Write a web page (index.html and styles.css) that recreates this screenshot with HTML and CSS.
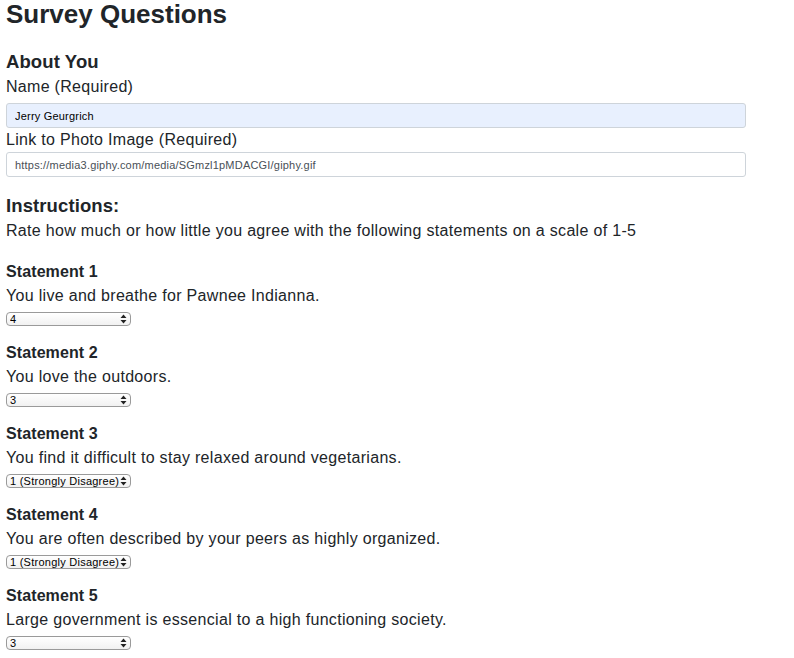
FILE: index.html
```html
<!DOCTYPE html>
<html lang="en">
<head>
<meta charset="utf-8">
<title>Survey Questions</title>
<link rel="stylesheet" href="styles.css">
</head>
<body>
<div class="page">
  <h1 class="title">Survey Questions</h1>

  <h3 class="section">About You</h3>
  <label class="label label-name" for="name">Name (Required)</label>
  <input id="name" class="field field-autofill" type="text" value="Jerry Geurgrich">
  <label class="label" for="photo">Link to Photo Image (Required)</label>
  <input id="photo" class="field" type="text" value="https://media3.giphy.com/media/SGmzl1pMDACGI/giphy.gif">

  <h3 class="section section-instr">Instructions:</h3>
  <p class="text text-instr">Rate how much or how little you agree with the following statements on a scale of 1-5</p>

  <div class="statements">
    <div class="statement">
      <h4 class="st-title">Statement 1</h4>
      <p class="text">You live and breathe for Pawnee Indianna.</p>
      <span class="select-wrap">
        <select class="select">
          <option>1 (Strongly Disagree)</option><option>2</option><option>3</option><option selected>4</option><option>5 (Strongly Agree)</option>
        </select>
        <svg class="arrows" width="7" height="10" viewBox="0 0 7 10"><path d="M3.5 0.5 L6.5 4 L0.5 4 Z M3.5 9.5 L6.5 6 L0.5 6 Z" fill="#222"/></svg>
      </span>
    </div>
    <div class="statement">
      <h4 class="st-title">Statement 2</h4>
      <p class="text">You love the outdoors.</p>
      <span class="select-wrap">
        <select class="select">
          <option>1 (Strongly Disagree)</option><option>2</option><option selected>3</option><option>4</option><option>5 (Strongly Agree)</option>
        </select>
        <svg class="arrows" width="7" height="10" viewBox="0 0 7 10"><path d="M3.5 0.5 L6.5 4 L0.5 4 Z M3.5 9.5 L6.5 6 L0.5 6 Z" fill="#222"/></svg>
      </span>
    </div>
    <div class="statement">
      <h4 class="st-title">Statement 3</h4>
      <p class="text">You find it difficult to stay relaxed around vegetarians.</p>
      <span class="select-wrap">
        <select class="select">
          <option selected>1 (Strongly Disagree)</option><option>2</option><option>3</option><option>4</option><option>5 (Strongly Agree)</option>
        </select>
        <svg class="arrows" width="7" height="10" viewBox="0 0 7 10"><path d="M3.5 0.5 L6.5 4 L0.5 4 Z M3.5 9.5 L6.5 6 L0.5 6 Z" fill="#222"/></svg>
      </span>
    </div>
    <div class="statement">
      <h4 class="st-title">Statement 4</h4>
      <p class="text">You are often described by your peers as highly organized.</p>
      <span class="select-wrap">
        <select class="select">
          <option selected>1 (Strongly Disagree)</option><option>2</option><option>3</option><option>4</option><option>5 (Strongly Agree)</option>
        </select>
        <svg class="arrows" width="7" height="10" viewBox="0 0 7 10"><path d="M3.5 0.5 L6.5 4 L0.5 4 Z M3.5 9.5 L6.5 6 L0.5 6 Z" fill="#222"/></svg>
      </span>
    </div>
    <div class="statement">
      <h4 class="st-title">Statement 5</h4>
      <p class="text">Large government is essencial to a high functioning society.</p>
      <span class="select-wrap">
        <select class="select">
          <option>1 (Strongly Disagree)</option><option>2</option><option selected>3</option><option>4</option><option>5 (Strongly Agree)</option>
        </select>
        <svg class="arrows" width="7" height="10" viewBox="0 0 7 10"><path d="M3.5 0.5 L6.5 4 L0.5 4 Z M3.5 9.5 L6.5 6 L0.5 6 Z" fill="#222"/></svg>
      </span>
    </div>
  </div>
</div>
</body>
</html>
```

FILE: styles.css
```css
html, body {
  margin: 0;
  padding: 0;
  background: #ffffff;
}

body {
  font-family: "Liberation Sans", Arial, Helvetica, sans-serif;
  color: #212529;
  font-size: 16px;
}

.page {
  padding: 0 6px;
  width: 740px;
}

.title {
  margin: 0;
  font-size: 26px;
  font-weight: 700;
  line-height: 28px;
}

.section {
  margin: 22px 0 0;
  font-size: 18.5px;
  font-weight: 700;
  line-height: 24px;
  letter-spacing: 0.1px;
}

.section-instr {
  margin-top: 17px;
}

.label {
  display: block;
  font-size: 16px;
  line-height: 24px;
  letter-spacing: 0.3px;
}

.label-name {
  margin-top: 1px;
  margin-bottom: 4px;
}

.field {
  display: block;
  box-sizing: border-box;
  width: 740px;
  height: 25px;
  margin: 0;
  padding: 0 8px;
  border: 1px solid #ced4da;
  border-radius: 3px;
  background: #ffffff;
  font-family: "Liberation Sans", Arial, Helvetica, sans-serif;
  font-size: 11px;
  letter-spacing: 0.2px;
  color: #495057;
  outline: none;
}

.field-autofill {
  background: #e8f0fe;
  color: #000000;
}

.text {
  margin: 0;
  font-size: 16px;
  line-height: 24px;
  letter-spacing: 0.31px;
}

.text-instr {
  margin-top: 1px;
}

.statements {
  margin-top: 17px;
}

.statement {
  margin-bottom: 15px;
}

.st-title {
  margin: 0;
  font-size: 16px;
  font-weight: 700;
  line-height: 24px;
  letter-spacing: 0.1px;
}

.select-wrap {
  position: relative;
  display: inline-block;
  margin-top: 4px;
  vertical-align: top;
}

.select {
  -webkit-appearance: none;
  appearance: none;
  display: block;
  box-sizing: border-box;
  width: 125px;
  height: 14px;
  margin: 0;
  padding: 0 7px 0 3px;
  border: 1px solid #9a9a9a;
  border-radius: 4px;
  background: linear-gradient(#ffffff, #f1f1f1);
  font-family: "Liberation Sans", Arial, Helvetica, sans-serif;
  font-size: 11px;
  letter-spacing: 0.25px;
  line-height: 12px;
  color: #000000;
  outline: none;
}

.arrows {
  position: absolute;
  right: 4px;
  top: 2px;
  pointer-events: none;
}
```
